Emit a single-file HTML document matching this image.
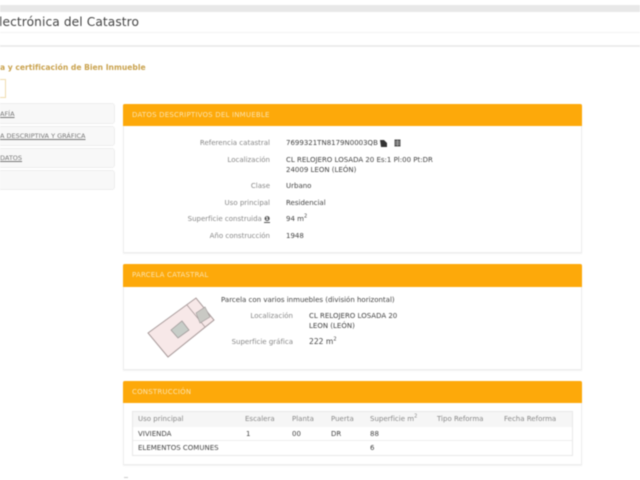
<!DOCTYPE html>
<html lang="es">
<head>
<meta charset="utf-8">
<style>
html,body{margin:0;padding:0;width:640px;height:480px;overflow:hidden;background:#fff}
#w{position:absolute;left:0;top:0;width:640px;height:480px;overflow:hidden;filter:blur(.6px);font-family:"DejaVu Sans","Liberation Sans",sans-serif;color:#333}
#w div{position:absolute;white-space:nowrap;box-sizing:border-box}
.t{font-size:7px;line-height:10px;color:#444}
.l{color:#888;text-align:right;width:120px}
.th{color:#888}
.bar{background:#fda90a;border-radius:2px 2px 0 0;left:123px;width:459px}
.bt{color:#fbe3ae;font-size:7px;line-height:10px;left:132px;letter-spacing:.2px}
.panel{left:123px;width:459px;background:#fff;border:1px solid #eeeeee;box-shadow:0 1px 1px #f2f2f2}
.side{left:-6px;width:121px;background:#f8f8f8;border:1px solid #eeeeee;border-radius:3px}
.sl{color:#777;text-decoration:underline;font-size:6.5px;line-height:10px}
sup{font-size:5px;line-height:0}
</style>
</head>
<body>
<div id="w">
  <div style="left:0;top:5px;width:640px;height:7px;background:#e8e8e8"></div>
  <div style="left:0;top:32px;width:640px;height:1px;background:#f3f3f3"></div>
  <div style="left:0;top:45px;width:640px;height:2px;background:#ececec"></div>
  <div style="left:-1px;top:14px;font-size:12.2px;line-height:16px;color:#444;letter-spacing:.1px">lectrónica del Catastro</div>
  <div style="left:0;top:62px;font-size:7.6px;line-height:11px;font-weight:bold;color:#c9a24e">a y certificación de Bien Inmueble</div>
  <div style="left:-6px;top:79px;width:12px;height:19px;border:1px solid #f0dcae;background:#fff"></div>

  <div class="side" style="top:103px;height:21px"></div>
  <div class="side" style="top:126px;height:20px"></div>
  <div class="side" style="top:148px;height:20px"></div>
  <div class="side" style="top:170px;height:20px"></div>
  <div class="sl" style="left:0;top:109px">AFÍA</div>
  <div class="sl" style="left:0;top:131px">A DESCRIPTIVA Y GRÁFICA</div>
  <div class="sl" style="left:0;top:153px">DATOS</div>

  <!-- Datos descriptivos -->
  <div class="panel" style="top:104px;height:149px"></div>
  <div class="bar" style="top:104px;height:22px"></div>
  <div class="bt" style="top:110px">DATOS DESCRIPTIVOS DEL INMUEBLE</div>
  <div class="t l" style="left:150px;top:138px">Referencia catastral</div>
  <div class="t" style="left:286px;top:138px">7699321TN8179N0003QB</div>
  <svg style="position:absolute;left:380px;top:139px" width="22" height="9" viewBox="0 0 22 9"><path d="M0 1h4l3 3v4H1z" fill="#333"/><rect x="14.500" y="0.500" width="6" height="7" fill="#555"/><path d="M15 3h5M15 5h5M17.500 1v6" stroke="#ccc" stroke-width=".6"/></svg>
  <div class="t l" style="left:150px;top:155px">Localización</div>
  <div class="t" style="left:286px;top:155px">CL RELOJERO LOSADA 20 Es:1 Pl:00 Pt:DR</div>
  <div class="t" style="left:286px;top:165px">24009 LEON (LEÓN)</div>
  <div class="t l" style="left:150px;top:181px">Clase</div>
  <div class="t" style="left:286px;top:181px">Urbano</div>
  <div class="t l" style="left:150px;top:198px">Uso principal</div>
  <div class="t" style="left:286px;top:198px">Residencial</div>
  <div class="t l" style="left:150px;top:214px">Superficie construida <b style="color:#555;text-decoration:underline">❶</b></div>
  <div class="t" style="left:286px;top:214px">94 m<sup>2</sup></div>
  <div class="t l" style="left:150px;top:231px">Año construcción</div>
  <div class="t" style="left:286px;top:231px">1948</div>

  <!-- Parcela -->
  <div class="panel" style="top:264px;height:106px"></div>
  <div class="bar" style="top:264px;height:23px"></div>
  <div class="bt" style="top:270px">PARCELA CATASTRAL</div>
  <svg style="position:absolute;left:140px;top:295px" width="80" height="70" viewBox="0 0 80 70">
    <path d="M8 38 L56 3 L74 25 L28 62 Z" fill="#f7e8e8" stroke="#a89a9a" stroke-width="1"/>
    <path d="M47 10 L65 32" fill="none" stroke="#a89a9a" stroke-width=".8"/>
    <path d="M56 18 L65 12 L70 22 L60 28 Z" fill="#c9c9c4" stroke="#a09a9a" stroke-width=".6"/>
    <path d="M31 35 L42 26 L49 35 L38 43 Z" fill="#c7cdc8" stroke="#a09a9a" stroke-width=".8"/>
  </svg>
  <div class="t" style="left:221px;top:295px;color:#444">Parcela con varios inmuebles (división horizontal)</div>
  <div class="t l" style="left:173px;top:311px">Localización</div>
  <div class="t" style="left:309px;top:311px">CL RELOJERO LOSADA 20</div>
  <div class="t" style="left:309px;top:321px">LEON (LEÓN)</div>
  <div class="t l" style="left:173px;top:337px">Superficie gráfica</div>
  <div class="t" style="left:309px;top:337px;font-size:7.6px">222 m<sup>2</sup></div>

  <!-- Construccion -->
  <div class="panel" style="top:381px;height:84px"></div>
  <div class="bar" style="top:381px;height:22px"></div>
  <div class="bt" style="top:387px">CONSTRUCCIÓN</div>
  <div style="left:132px;top:411px;width:441px;height:45px;border:1px solid #e8e8e8"></div>
  <div style="left:133px;top:412px;width:439px;height:15px;background:#f6f6f6"></div>
  <div style="left:133px;top:440px;width:439px;height:1px;background:#eeeeee"></div>
  <div class="t th" style="left:138px;top:414px">Uso principal</div>
  <div class="t th" style="left:245px;top:414px">Escalera</div>
  <div class="t th" style="left:292px;top:414px">Planta</div>
  <div class="t th" style="left:331px;top:414px">Puerta</div>
  <div class="t th" style="left:370px;top:414px">Superficie m<sup>2</sup></div>
  <div class="t th" style="left:437px;top:414px">Tipo Reforma</div>
  <div class="t th" style="left:504px;top:414px">Fecha Reforma</div>
  <div class="t" style="left:138px;top:429px">VIVIENDA</div>
  <div class="t" style="left:246px;top:429px">1</div>
  <div class="t" style="left:292px;top:429px">00</div>
  <div class="t" style="left:331px;top:429px">DR</div>
  <div class="t" style="left:370px;top:429px">88</div>
  <div class="t" style="left:138px;top:443px">ELEMENTOS COMUNES</div>
  <div class="t" style="left:370px;top:443px">6</div>
  <div style="left:124px;top:477px;width:4px;height:1px;background:#ccc"></div>
</div>
</body>
</html>
